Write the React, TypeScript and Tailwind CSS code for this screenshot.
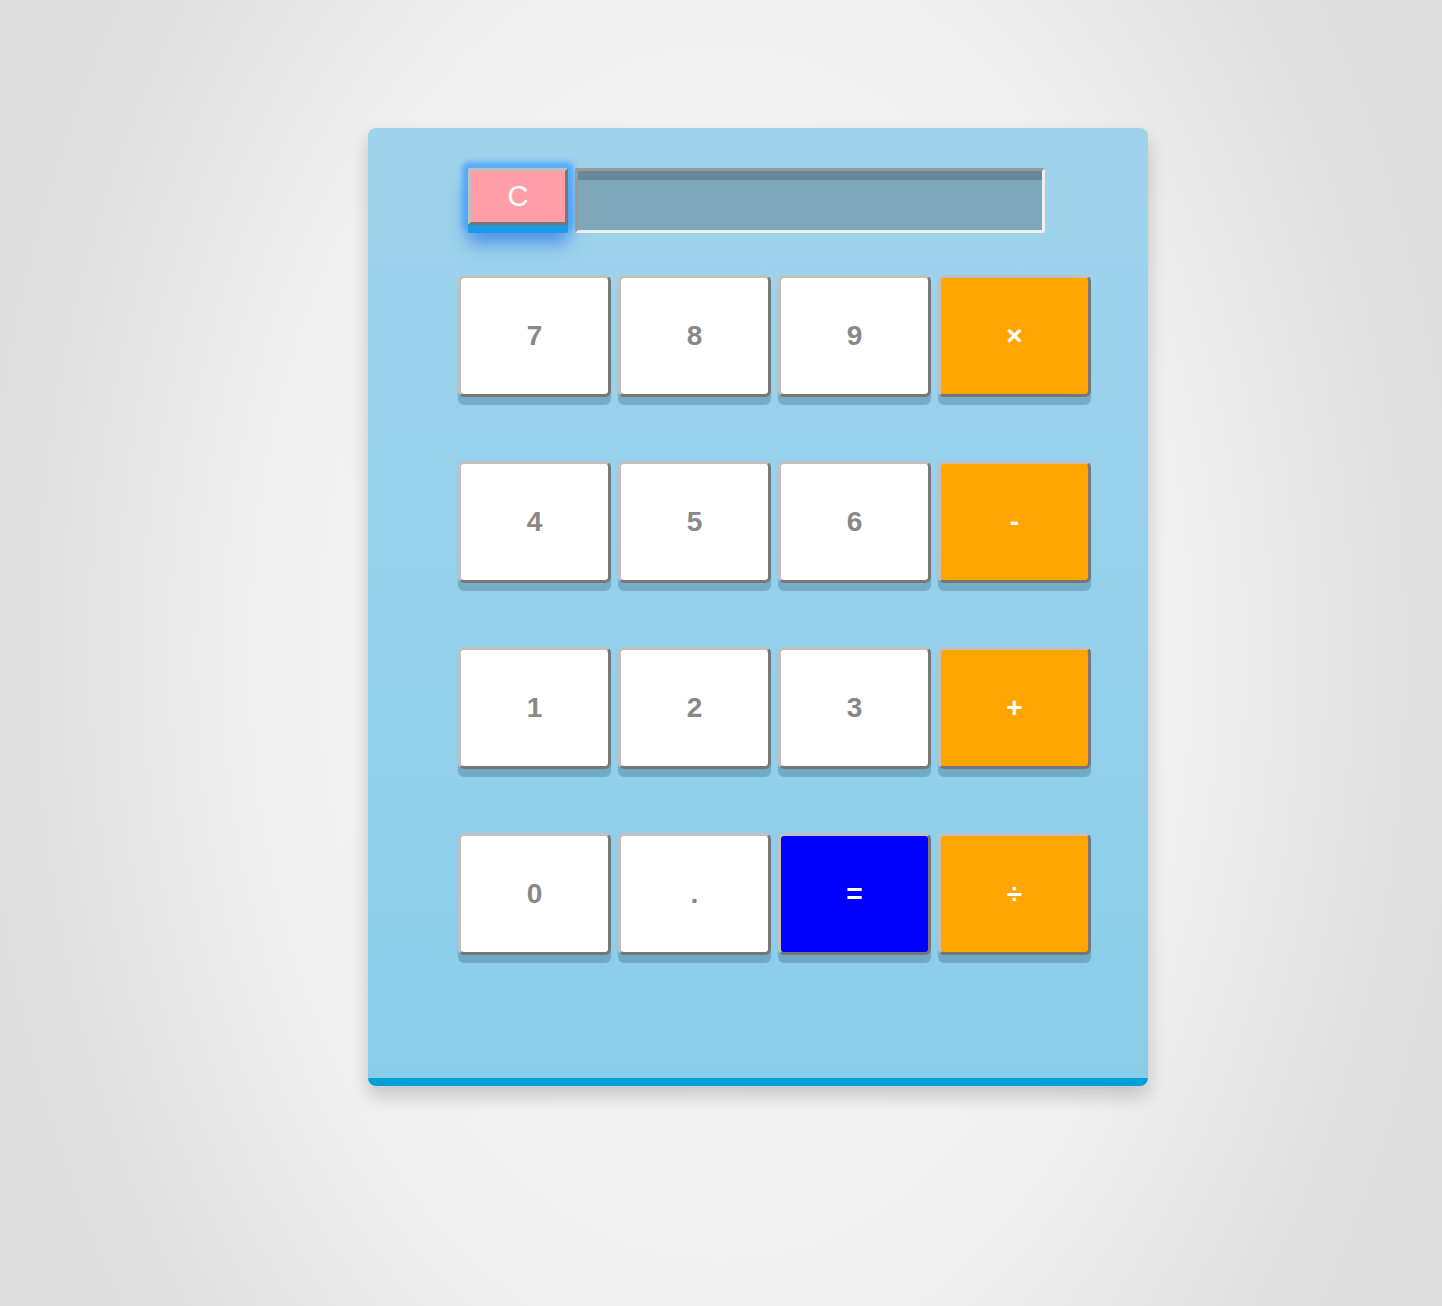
const keys = [
  ["7", "8", "9", "×"],
  ["4", "5", "6", "-"],
  ["1", "2", "3", "+"],
  ["0", ".", "=", "÷"],
]

const keyColor = (k: string) => {
  if (k === "=") return "bg-[#0000ff] text-white"
  if ("×-+÷".includes(k)) return "bg-[#ffa500] text-white"
  return "bg-white text-[#888888]"
}

const App = () => {
  return (
    <div
      className="min-h-screen w-full bg-[radial-gradient(760px_1150px_at_50%_50%,#f6f6f6_0%,#f0f0f0_60%,#dcdcdc_100%)] pt-[128px] pb-[220px]"
      style={{ fontFamily: '"Liberation Sans", Arial, sans-serif' }}
    >
      <div className="ml-[368px] w-[780px] rounded-[8px] border-b-[8px] border-[#009fd6] bg-gradient-to-b from-[#9fd3eb] to-[#8acdeb] pt-[40px] pl-[90px] pb-[123px] shadow-[0_10px_18px_rgba(0,0,0,0.18)]">
        {/* top row: clear + display */}
        <div className="ml-[10px] flex gap-[7px]">
          <button className="h-[57px] w-[100px] rounded-[2px] border-[3px] border-t-[#c0c0c0] border-l-[#c0c0c0] border-r-[#777] border-b-[#777] bg-[#ff9ea6] text-[29px] leading-none text-white shadow-[0_8px_0_#1a9be8,0_0_5px_6px_rgba(75,165,250,0.85),0_18px_18px_rgba(20,100,230,0.6)]">
            C
          </button>
          <div className="h-[65px] w-[470px] rounded-[3px] border-[3px] border-t-[#999] border-l-[#999] border-r-[#eee] border-b-[#eee] bg-[#7ea7ba] shadow-[inset_0_9px_0_rgba(0,0,0,0.18)]"></div>
        </div>

        {/* keys */}
        <div className="mt-[42px] flex flex-col gap-[64px]">
          {keys.map((row, i) => (
            <div key={i} className="flex gap-[7px]">
              {row.map((k) => (
                <button
                  key={k}
                  className={`flex h-[122px] w-[153px] items-center justify-center rounded-[6px] border-[3px] border-t-[#c0c0c0] border-l-[#c0c0c0] border-r-[#777] border-b-[#777] text-[28px] font-bold shadow-[0_8px_1px_rgba(0,40,70,0.22)] ${keyColor(k)}`}
                >
                  {k}
                </button>
              ))}
            </div>
          ))}
        </div>
      </div>
    </div>
  )
}

export default App
